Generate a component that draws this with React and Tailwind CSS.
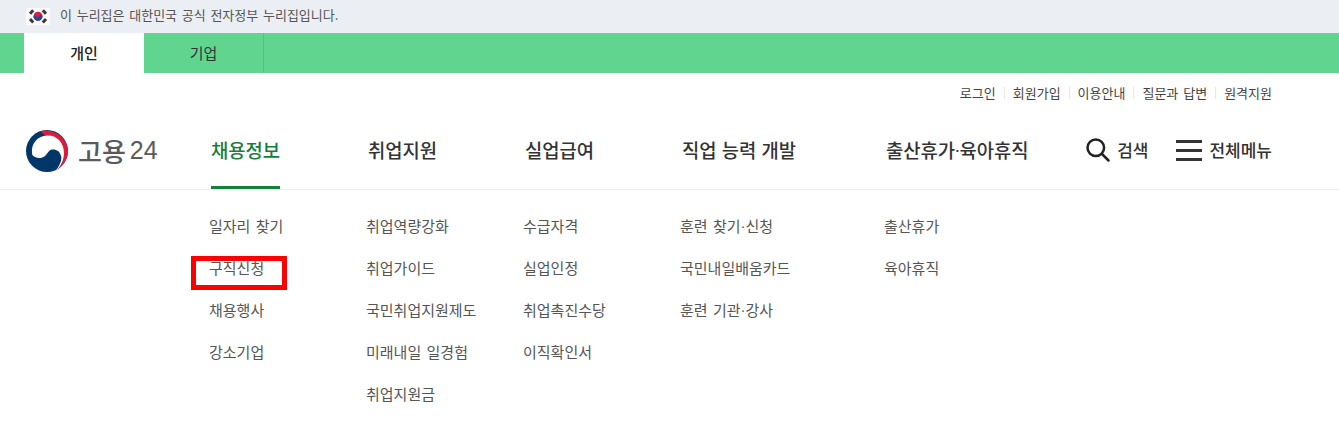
import React from 'react';

const utilLinks = ['로그인', '회원가입', '이용안내', '질문과 답변', '원격지원'];

const menus = [
  { title: '채용정보', width: 'w-[157px]', active: true, items: ['일자리 찾기', '구직신청', '채용행사', '강소기업'] },
  { title: '취업지원', width: 'w-[157px]', items: ['취업역량강화', '취업가이드', '국민취업지원제도', '미래내일 일경험', '취업지원금'] },
  { title: '실업급여', width: 'w-[157px]', items: ['수급자격', '실업인정', '취업촉진수당', '이직확인서'] },
  { title: '직업 능력 개발', width: 'w-[204px]', items: ['훈련 찾기·신청', '국민내일배움카드', '훈련 기관·강사'] },
  { title: '출산휴가·육아휴직', width: 'w-[200px]', items: ['출산휴가', '육아휴직'] },
];

// 가운뎃점 폭을 좁게 표시
const DotText = ({ text, dotClass = '' }) => {
  const parts = text.split('·');
  if (parts.length === 1) return text;
  return (
    <>
      {parts[0]}
      <span className={`font-['Liberation_Sans',sans-serif] ${dotClass}`}>·</span>
      {parts[1]}
    </>
  );
};

const FlagIcon = () => (
  <svg width="24" height="17" viewBox="0 0 24 17" className="shrink-0">
    <rect width="24" height="17" fill="#fbfbfc" />
    <circle cx="12" cy="8.300" r="4.500" fill="#d3213f" />
    <path d="M7.500 8.300a4.500 4.500 0 0 0 9 0c0-1-1.800-1.800-2.800-.9-1 .9-1 2-2.200 1.800-1.200-.2-1.300-1.500-2.200-1.500-.8 0-1.800-.2-1.800.6z" fill="#1b4c97" />
    <g stroke="#3a3a3a" strokeWidth="3" strokeLinecap="butt">
      <path d="M4 5.800l3.200-3.600M16.800 2.200l3.200 3.600M4 11l3.200 3.600M16.800 14.600l3.200-3.600" />
    </g>
  </svg>
);

const GovLogo = () => (
  <svg width="44" height="44" viewBox="0 0 44 44" className="shrink-0">
    <circle cx="22" cy="22" r="21" fill="#003668" />
    <path d="M16 2C28 -1 42 8 43 21c.5 8-4 15-12 21 5-5 8-11 8-18C38 14 30 6 20 6.500 18 5 17 3.500 16 2z" fill="#dc1a3c" />
    <path d="M7 24C6 14 13 7 22 6.500 32 6 39 14 39 24c0 7-3 13-8 18 3-5 6.500-11 5-15-1-5-5-7-9-6.500-3 .5-4 3.500-7 6.500-3 2.500-7 2.500-10 1-2-1-3-2-3-4z" fill="#fff" />
  </svg>
);

const SearchIcon = () => (
  <svg width="24" height="24" viewBox="0 0 24 24" fill="none" stroke="#222" strokeWidth="2.500" strokeLinecap="round" className="shrink-0">
    <circle cx="9.800" cy="9.800" r="8.300" />
    <path d="M16 16l6.500 6.500" />
  </svg>
);

const App = () => {
  return (
    <div className="relative h-[436px] w-[1339px] overflow-hidden bg-white font-['Noto_Sans_CJK_KR','Noto_Sans',sans-serif] text-[#444] [word-spacing:2px]">
      {/* 정부 누리집 안내 */}
      <div className="flex h-[33px] items-center gap-[10px] bg-[#ebeef3] pl-[26px] text-[13px] text-[#555] [word-spacing:1.800px]">
        <FlagIcon />
        <span className="pb-[3px]">이 누리집은 대한민국 공식 전자정부 누리집입니다.</span>
      </div>

      {/* 개인 / 기업 탭 */}
      <div className="flex h-[40px] bg-[#5fd590] pl-[24px] text-[15px]">
        <div className="flex w-[120px] items-center justify-center bg-white font-medium text-[#222]">개인</div>
        <div className="flex w-[120px] items-center justify-center border-r border-[#54c382] text-[#333]">기업</div>
      </div>

      {/* 상단 링크 */}
      <div className="flex h-[40px] items-center justify-end pr-[67px] text-[13px] text-[#444]">
        {utilLinks.map((link, i) => (
          <React.Fragment key={link}>
            {i > 0 && <span className="mx-[8px] h-[12px] w-px bg-[#e8e8e8]" />}
            <span>{link}</span>
          </React.Fragment>
        ))}
      </div>

      {/* 메인 네비게이션 */}
      <div className="flex h-[77px] items-start border-b border-[#ececec]">
        <div className="flex h-[76px] w-[211px] shrink-0 items-center pb-[1px] pl-[25px]">
          <GovLogo />
          <span className="ml-[9px] flex items-center text-[26px] font-medium leading-none text-[#5a5a5a]">
            고용<span className="ml-[4px] font-['Liberation_Sans',sans-serif] text-[25px] font-normal">24</span>
          </span>
        </div>
        {menus.map((menu) => (
          <div key={menu.title} className={`${menu.width} shrink-0`}>
            <span className={`flex h-[76px] w-fit items-center whitespace-pre pb-[2px] text-[18.800px] font-medium [word-spacing:1px] ${menu.active ? 'border-b-[3px] border-[#14803c] pt-[3px] text-[#14803c]' : 'text-[#333]'}`}>
              <DotText text={menu.title} dotClass="mx-[-1px]" />
            </span>
          </div>
        ))}
        <div className="ml-auto flex h-[76px] items-center pb-[2px] pr-[67px] text-[17px] font-medium text-[#333]">
          <SearchIcon />
          <span className="ml-[7px]">검색</span>
          <div className="ml-[28px] flex w-[26px] flex-col gap-[6px]">
            <span className="h-[3px] bg-[#333]" />
            <span className="h-[3px] bg-[#333]" />
            <span className="h-[3px] bg-[#333]" />
          </div>
          <span className="ml-[7px]">전체메뉴</span>
        </div>
      </div>

      {/* 서브 메뉴 */}
      <div className="flex pl-[209px] pt-[15px] text-[15px] text-[#555]">
        {menus.map((menu) => (
          <ul key={menu.title} className={`${menu.width} shrink-0`}>
            {menu.items.map((item) => (
              <li key={item} className="flex h-[42px] items-center whitespace-pre">
                <DotText text={item} />
              </li>
            ))}
          </ul>
        ))}
      </div>

      {/* 강조 표시 */}
      <div className="absolute left-[191px] top-[256px] h-[34px] w-[96px] border-[5px] border-[#ff0000]" />
    </div>
  );
};

export default App;
